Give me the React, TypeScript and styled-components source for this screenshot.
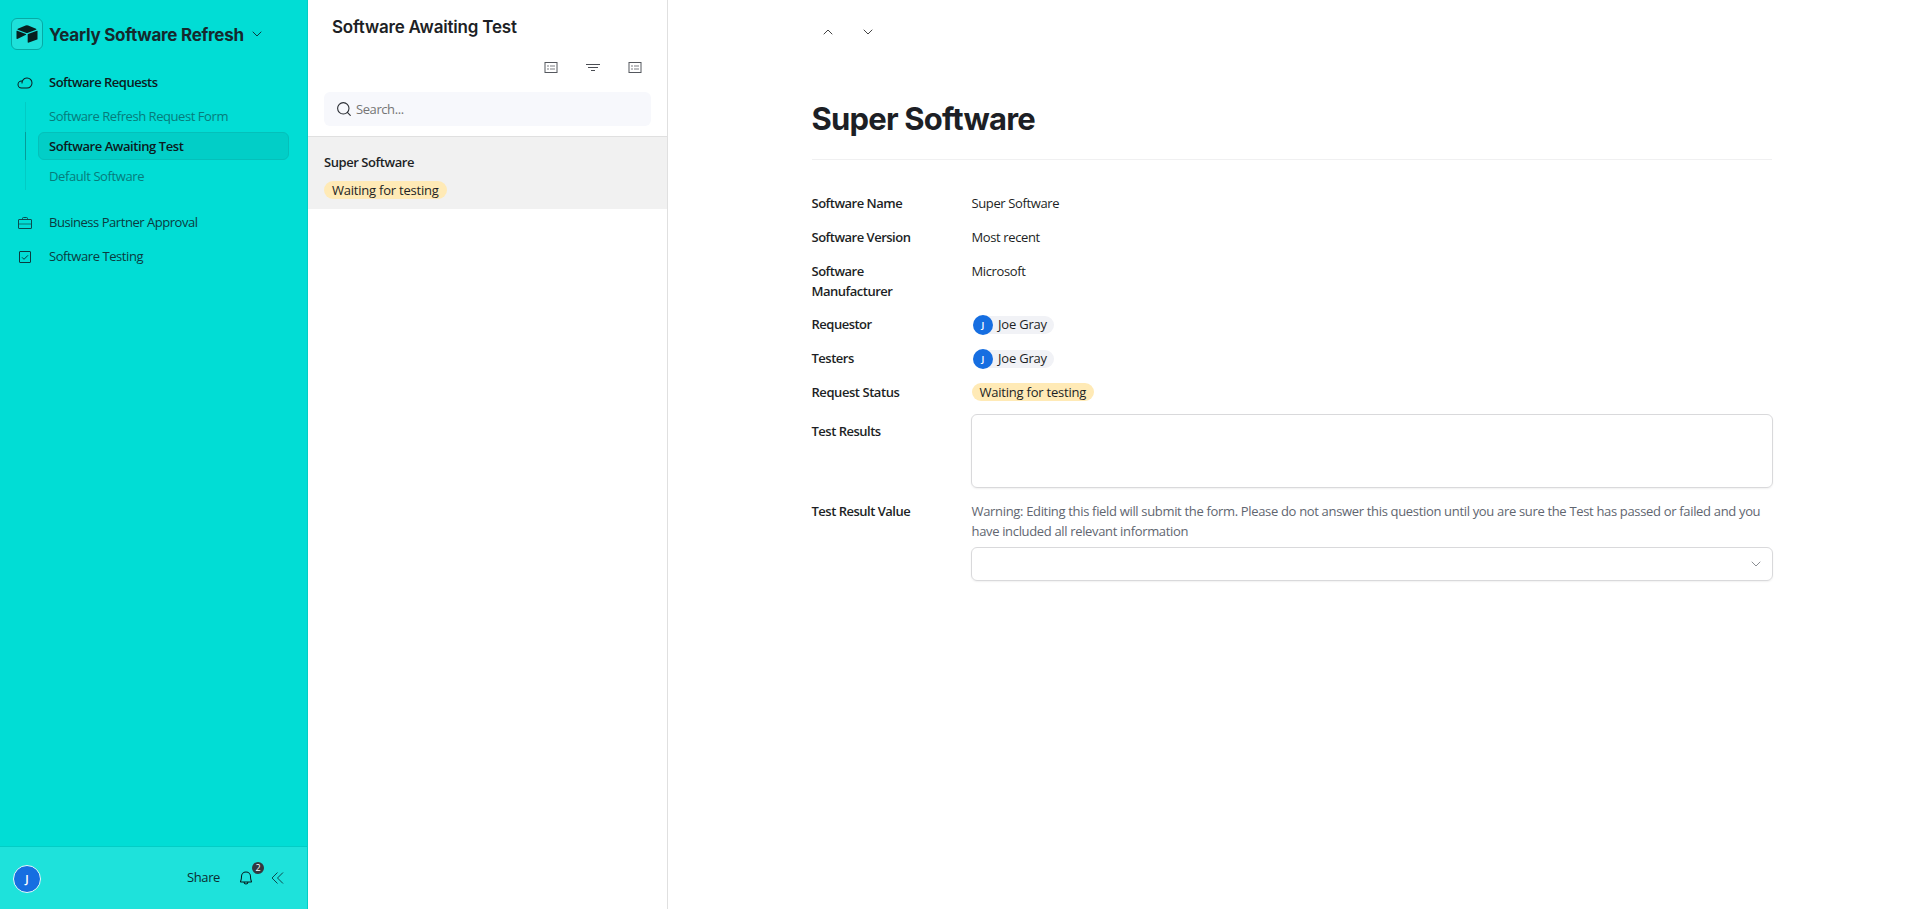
import React from "react";
import styled, { createGlobalStyle } from "styled-components";
import { PiBell, PiCloud } from "react-icons/pi";

const GlobalStyle = createGlobalStyle`
  *, *::before, *::after { box-sizing: border-box; }
  body {
    margin: 0;
    font-family: "Open Sans", "Noto Sans", sans-serif;
    font-size: 13px;
    line-height: 19.5px;
    color: #1d1f25;
    background: #fff;
  }
`;

const Page = styled.div`
  display: flex;
  width: 100%;
  height: 100vh;
  overflow: hidden;
`;

const Text = styled.span<{ $track?: number; $strong?: boolean }>`
  white-space: nowrap;
  letter-spacing: ${(p) => p.$track ?? (p.$strong ? -0.5 : -0.38)}px;
  font-weight: ${(p) => (p.$strong ? 600 : 400)};
`;

/* Sidebar */
const Sidebar = styled.nav`
  display: flex;
  flex-direction: column;
  width: 308px;
  flex: none;
  background: #01ddd5;
  border-right: 1px solid #02cdc6;
`;

const BaseHeader = styled.header`
  display: flex;
  align-items: center;
  padding: 18px 0 0 11px;
`;

const LogoBox = styled.div`
  display: flex;
  align-items: center;
  justify-content: center;
  width: 32px;
  height: 32px;
  border: 1px solid #06aaa5;
  border-radius: 6px;
  background: #1ee1da;
  svg { margin-bottom: 1px; }
`;

const BaseTitle = styled.h2`
  margin: 2px 8px 0 6px;
  font: 700 17px/24px Inter, sans-serif;
  letter-spacing: -0.26px;
  color: #15292d;
  white-space: nowrap;
`;

const NavItem = styled.div<{ $strong?: boolean }>`
  display: flex;
  align-items: center;
  height: 34px;
  padding-left: 17px;
  gap: 16px;
  color: ${(p) => (p.$strong ? "#0c1a20" : "#0b3b40")};
  svg { flex: none; }
`;

const NavList = styled.div`
  padding-top: 16px;
  flex: 1;
`;

const SubList = styled.div`
  display: flex;
  flex-direction: column;
  margin: 2px 0 16px 25px;
`;

const SubItem = styled.div<{ $active?: boolean; $last?: boolean }>`
  display: flex;
  align-items: center;
  height: ${(p) => (p.$active ? 28 : 30)}px;
  border-left: 1px solid ${(p) => (p.$active ? "#059c98" : "#02cbc4")};
  padding-left: ${(p) => (p.$active ? 12 : 23)}px;
  padding-top: ${(p) => (p.$last ? 4 : 0)}px;
  color: ${(p) => (p.$active ? "#0c1a20" : "#067c7b")};
`;

const ActivePill = styled.div`
  display: flex;
  align-items: center;
  width: 251px;
  height: 28px;
  padding: 2px 0 0 10px;
  border: 1px solid #04c0ba;
  border-radius: 6px;
  background: #02cec7;
`;

const SidebarFooter = styled.footer`
  display: flex;
  align-items: center;
  height: 63px;
  padding: 0 0 0 13px;
  border-top: 1px solid #02cdc6;
  background: #1ee2db;
  color: #0c2c31;
`;

const Avatar = styled.span<{ $size: number; $ring?: boolean }>`
  display: flex;
  align-items: center;
  justify-content: center;
  flex: none;
  width: ${(p) => p.$size}px;
  height: ${(p) => p.$size}px;
  margin-top: ${(p) => (p.$ring ? 2 : 0)}px;
  padding-bottom: 1px;
  border-radius: 50%;
  border: ${(p) => (p.$ring ? "1px solid #e6fbfa" : "0")};
  background: #166ee1;
  color: #fff;
  font-family: "Noto Sans", sans-serif;
  font-size: ${(p) => (p.$ring ? 11 : 9)}px;
  font-weight: 600;
  line-height: 1;
`;

const FooterActions = styled.div`
  display: flex;
  align-items: center;
  margin: -1px 0 0 auto;
  padding-right: 23px;
  svg { display: block; }
`;

const BellWrap = styled.span`
  position: relative;
  margin: 1px 17px 0 18px;
  color: #06191c;
`;

const Badge = styled.span`
  position: absolute;
  left: 14px;
  top: -8px;
  width: 12px;
  height: 12px;
  border-radius: 6px;
  background: #333840;
  color: #fff;
  font-size: 9px;
  line-height: 12px;
  text-align: center;
`;

/* Record list */
const ListPane = styled.section`
  display: flex;
  flex-direction: column;
  width: 360px;
  flex: none;
  border-right: 1px solid #e0e0e0;
`;

const ListTitle = styled.h1`
  margin: 15px 0 0 24px;
  font: 600 17px/24px Inter, sans-serif;
  letter-spacing: -0.2px;
  color: #1d1f25;
`;

const Toolbar = styled.div`
  display: flex;
  justify-content: flex-end;
  gap: 26px;
  height: 53px;
  padding: 21px 24px 0 0;
`;

const SearchBox = styled.div`
  display: flex;
  align-items: center;
  gap: 4px;
  height: 34px;
  margin: 0 16px 10px;
  padding-left: 12px;
  border-radius: 6px;
  background: #f7f8fc;
  color: #757575;
`;

const SearchText = styled.div`
  padding-top: 2px;
`;

const RecordCard = styled.article`
  display: flex;
  flex-direction: column;
  align-items: flex-start;
  height: 73px;
  padding: 16px 16px 0;
  border-top: 1px solid #e0e0e0;
  background: #f1f1f1;
  gap: 8.5px;
`;

const StatusPill = styled.span`
  display: inline-flex;
  align-items: center;
  justify-content: center;
  width: 122.5px;
  height: 18px;
  padding-top: 1px;
  border-radius: 9px;
  background: #ffeab6;
`;

/* Record detail */
const Detail = styled.main`
  flex: 1;
  padding-left: 143.5px;
`;

const Pager = styled.div`
  display: flex;
  gap: 30px;
  padding: 27px 0 0 11.5px;
  svg { display: block; }
`;

const DetailBody = styled.div`
  width: 960px;
`;

const RecordTitle = styled.h1`
  margin: 62px 0 0;
  height: 61px;
  font: 700 31px/40px Inter, sans-serif;
  letter-spacing: -0.8px;
  border-bottom: 1px solid #f0f0f1;
  color: #1d1f25;
`;

const Fields = styled.div`
  padding-top: 34px;
`;

const Field = styled.div<{ $gap: number }>`
  display: flex;
  align-items: flex-start;
  margin-bottom: ${(p) => p.$gap}px;
`;

const Label = styled.div<{ $drop?: number }>`
  display: flex;
  flex-direction: column;
  width: 160px;
  flex: none;
  padding-top: ${(p) => p.$drop ?? 0}px;
`;

const Value = styled.div`
  display: flex;
  flex-direction: column;
  flex: 1;
  height: auto;
  min-height: 19.5px;
  align-items: flex-start;
`;

const Collaborator = styled.span`
  display: inline-flex;
  align-items: center;
  gap: 5px;
  width: 81px;
  height: 18px;
  margin: 0.5px 0 0 1.5px;
  border-radius: 9px;
  background: #f1f2f6;
`;

const InputBox = styled.div<{ $height: number }>`
  display: flex;
  align-items: center;
  justify-content: flex-end;
  width: 802px;
  height: ${(p) => p.$height}px;
  margin: 0 -0.5px;
  padding-right: 11px;
  border: 1px solid #d9d9db;
  border-radius: 6px;
  box-shadow: 0 1px 2px rgba(0, 0, 0, 0.06);
`;

const Help = styled.div`
  display: flex;
  flex-direction: column;
  margin-bottom: 6px;
  color: #616670;
`;

const Chevron = ({ up, color = "#444" }: { up?: boolean; color?: string }) => (
  <svg width="10" height="10" viewBox="0 0 10 10" fill="none" stroke={color} strokeLinecap="round" strokeLinejoin="round">
    <path d={up ? "M1 7l4-4 4 4" : "M1 3l4 4 4-4"} />
  </svg>
);

const ListIcon = () => (
  <svg width="16" height="16" viewBox="0 0 16 16" fill="none" stroke="#55585e">
    <rect x="2" y="2.5" width="12" height="10" />
    <path d="M4 6h2M7 6h5M4 9h2M7 9h5" stroke="#7c7f84" strokeWidth="1.2" />
  </svg>
);

const FilterIcon = () => (
  <svg width="16" height="16" viewBox="0 0 16 16" fill="none" stroke="#4a4d53">
    <path d="M1 4.5h14M3 7.5h10M6 10.5h4" />
  </svg>
);

const BaseLogo = () => (
  <svg width="22" height="18" viewBox="0 0 22 18" fill="#07201f">
    <path d="M9.6 .6 1.8 3.7c-.5.2-.5.8 0 1l8 3c.7.3 1.5.3 2.2 0l8-3c.5-.2.5-.8 0-1L12.2.6a3.6 3.6 0 0 0-2.6 0z" />
    <path d="M21.5 6.2v7.7c0 .3-.2.5-.4.6l-8.9 3.2c-.3.1-.5-.1-.5-.4V9.7c0-.3.2-.5.4-.6l8.9-3.3c.3-.1.5.1.5.4z" />
    <path d="M10 9.8 1.3 14c-.4.2-.8 0-.8-.4V6.1c0-.3.3-.5.7-.4l8.7 3.4c.4.2.4.5.1.7z" />
  </svg>
);

const textFields: { lines: string[]; value: string; gap: number }[] = [
  { lines: ["Software Name"], value: "Super Software", gap: 14.5 },
  { lines: ["Software Version"], value: "Most recent", gap: 14.5 },
  { lines: ["Software", "Manufacturer"], value: "Microsoft", gap: 14 },
];

export default function App() {
  return (
    <Page>
      <GlobalStyle />
      <Sidebar>
        <BaseHeader>
          <LogoBox><BaseLogo /></LogoBox>
          <BaseTitle>Yearly Software Refresh</BaseTitle>
          <Chevron color="#0b3b40" />
        </BaseHeader>
        <NavList>
          <NavItem $strong>
            <PiCloud size={16} />
            <Text $strong>Software Requests</Text>
          </NavItem>
          <SubList>
            <SubItem><Text $track={-0.44}>Software Refresh Request Form</Text></SubItem>
            <SubItem $active>
              <ActivePill><Text $strong $track={-0.43}>Software Awaiting Test</Text></ActivePill>
            </SubItem>
            <SubItem $last><Text $track={-0.4}>Default Software</Text></SubItem>
          </SubList>
          <NavItem>
            <svg width="16" height="16" viewBox="0 0 16 16" fill="none" stroke="#0b4b4f">
              <rect x="1.5" y="4.5" width="13" height="9" rx="0.5" />
              <path d="M5.5 4.5v-1a1 1 0 0 1 1-1h3a1 1 0 0 1 1 1v1" />
              <path d="M1.5 9h13" strokeOpacity="0.7" />
            </svg>
            <Text $track={-0.46}>Business Partner Approval</Text>
          </NavItem>
          <NavItem>
            <svg width="16" height="16" viewBox="0 0 16 16" fill="none" stroke="#0b3b40">
              <rect x="2.5" y="2.5" width="11" height="11" rx="0.5" />
              <path d="M5 8.3l2 2 4-4" />
            </svg>
            <Text $track={-0.42}>Software Testing</Text>
          </NavItem>
        </NavList>
        <SidebarFooter>
          <Avatar $size={28} $ring>J</Avatar>
          <FooterActions>
            <Text>Share</Text>
            <BellWrap>
              <PiBell size={16} />
              <Badge>2</Badge>
            </BellWrap>
            <svg width="13" height="12" viewBox="0 0 13 12" fill="none" stroke="#0b4b4f">
              <path d="M6.5 .5 1 6l5.5 5.5M12 .5 6.5 6l5.5 5.5" />
            </svg>
          </FooterActions>
        </SidebarFooter>
      </Sidebar>

      <ListPane>
        <ListTitle>Software Awaiting Test</ListTitle>
        <Toolbar><ListIcon /><FilterIcon /><ListIcon /></Toolbar>
        <SearchBox>
          <svg width="16" height="16" viewBox="0 0 16 16" fill="none" stroke="#2d3036" strokeWidth="1.1" strokeLinecap="round">
            <circle cx="7.3" cy="7.3" r="5.7" /><path d="M11.4 11.4l2.900 2.900" />
          </svg>
          <SearchText><Text $track={-0.42}>Search...</Text></SearchText>
        </SearchBox>
        <RecordCard>
          <Text $strong $track={-0.44}>Super Software</Text>
          <StatusPill><Text $track={-0.22}>Waiting for testing</Text></StatusPill>
        </RecordCard>
      </ListPane>

      <Detail>
        <Pager><Chevron up /><Chevron /></Pager>
        <DetailBody>
          <RecordTitle>Super Software</RecordTitle>
          <Fields>
            {textFields.map((f) => (
              <Field key={f.value} $gap={f.gap}>
                <Label>{f.lines.map((l) => <Text key={l} $strong>{l}</Text>)}</Label>
                <Value><Text>{f.value}</Text></Value>
              </Field>
            ))}
            {["Requestor", "Testers"].map((l) => (
              <Field key={l} $gap={14.5}>
                <Label><Text $strong>{l}</Text></Label>
                <Value><Collaborator><Avatar $size={20}>J</Avatar><Text $track={-0.2}>Joe Gray</Text></Collaborator></Value>
              </Field>
            ))}
            <Field $gap={11.5}>
              <Label><Text $strong $track={-0.44}>Request Status</Text></Label>
              <Value><StatusPill><Text $track={-0.22}>Waiting for testing</Text></StatusPill></Value>
            </Field>
            <Field $gap={14}>
              <Label $drop={8}><Text $strong>Test Results</Text></Label>
              <Value><InputBox $height={74} /></Value>
            </Field>
            <Field $gap={0}>
              <Label><Text $strong>Test Result Value</Text></Label>
              <Value>
                <Help>
                  <Text $track={-0.33}>Warning: Editing this field will submit the form. Please do not answer this question until you are sure the Test has passed or failed and you</Text>
                  <Text $track={-0.34}>have included all relevant information</Text>
                </Help>
                <InputBox $height={34}><Chevron color="#8c8f94" /></InputBox>
              </Value>
            </Field>
          </Fields>
        </DetailBody>
      </Detail>
    </Page>
  );
}
